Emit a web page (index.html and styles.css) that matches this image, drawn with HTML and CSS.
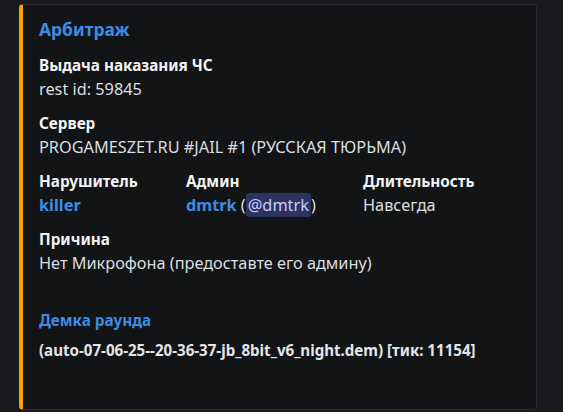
FILE: index.html
```html
<!DOCTYPE html>
<html lang="ru">

<head>
    <meta charset="UTF-8">
    <meta name="viewport" content="width=device-width, initial-scale=1.0">
    <title>Арбитраж</title>
    <link rel="stylesheet" href="styles.css">
</head>

<body>
    <div class="embed">
        <div class="embed-title">Арбитраж</div>
        <div class="fields">
            <div class="field full">
                <div class="field-name">Выдача наказания ЧС</div>
                <div class="field-value">rest id: 59845</div>
            </div>
            <div class="field full">
                <div class="field-name">Сервер</div>
                <div class="field-value">PROGAMESZET.RU #JAIL #1 (РУССКАЯ ТЮРЬМА)</div>
            </div>
            <div class="field">
                <div class="field-name">Нарушитель</div>
                <div class="field-value"><span class="link">killer</span></div>
            </div>
            <div class="field">
                <div class="field-name">Админ</div>
                <div class="field-value"><span class="link">dmtrk</span> (<span class="mention">@dmtrk</span>)</div>
            </div>
            <div class="field">
                <div class="field-name">Длительность</div>
                <div class="field-value">Навсегда</div>
            </div>
            <div class="field full">
                <div class="field-name">Причина</div>
                <div class="field-value">Нет Микрофона (предоставте его админу)</div>
            </div>
            <div class="field full demo">
                <div class="field-name demo-name">Демка раунда</div>
                <div class="field-value demo-value">(auto-07-06-25--20-36-37-jb_8bit_v6_night.dem) [тик: 11154]</div>
            </div>
        </div>
    </div>
</body>

</html>
```

FILE: styles.css
```css
body {
    margin: 0;
    padding: 4px 26px 2px 19px;
    background-color: #1a1a1e;
    font-family: "Noto Sans", "Open Sans", sans-serif;
    color: #dbdee1;
}

.embed {
    height: 406px;
    box-sizing: border-box;
    background-color: #131416;
    border: 1px solid #2c2d32;
    border-left: 4px solid #f8a400;
    border-radius: 4px;
    padding: 12px 16px 16px 16px;
}

.embed-title {
    font-size: 17.4px;
    font-weight: 700;
    line-height: 24px;
    color: #3c8de3;
}

.fields {
    display: grid;
    grid-template-columns: 147px 177px 1fr;
    row-gap: 12px;
    margin-top: 14px;
}

.field.full {
    grid-column: 1 / -1;
}

.field-name {
    font-size: 15.3px;
    font-weight: 700;
    line-height: 20px;
    margin-bottom: 2px;
    color: #f2f3f5;
}

.field-value {
    font-size: 16.3px;
    line-height: 24px;
    color: #dbdee1;
    white-space: nowrap;
}

.link {
    color: #3c8de3;
    font-weight: 700;
}

.mention {
    background-color: #2d3260;
    color: #c9cdfb;
    border-radius: 3px;
    padding: 1px 2px;
}

.demo {
    margin-top: 23px;
}

.demo-name {
    color: #3c8de3;
}

.demo-value {
    margin-top: 8px;
    font-size: 15.1px;
    font-weight: 700;
    color: #e3e5e8;
}
```
